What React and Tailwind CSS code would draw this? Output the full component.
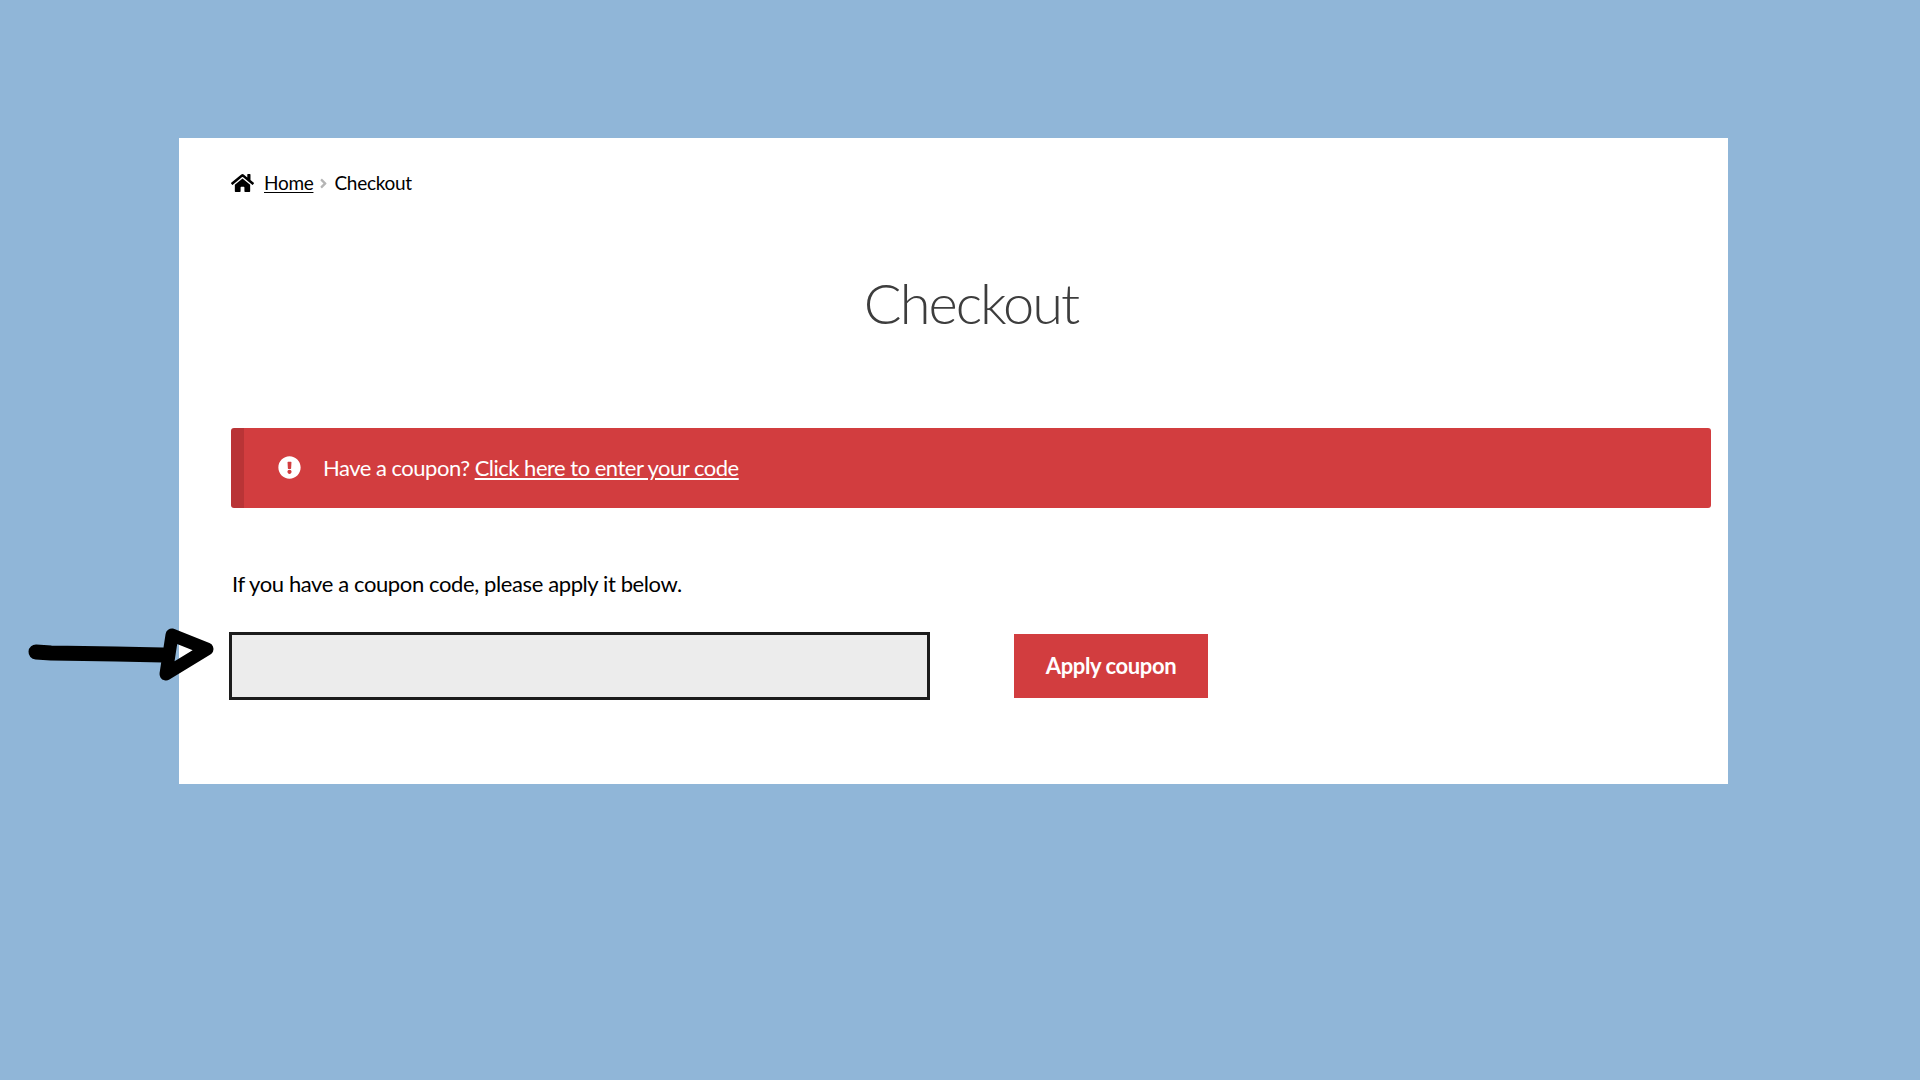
import React from "react";
import { FaHome, FaExclamationCircle, FaAngleRight } from "react-icons/fa";

const font = "font-['Lato','Noto_Sans',sans-serif]";

function Arrow() {
  return (
    <svg className="absolute left-[26px] top-[625px]" width="190" height="60" viewBox="0 0 190 60" fill="none" aria-hidden="true">
      <path d="M10 27 L25 28 L90 29 L137 30" stroke="#000" strokeWidth="15" strokeLinecap="round" strokeLinejoin="round" />
      <path d="M146 10 L181 24 L140 49 Z" stroke="#000" strokeWidth="13" strokeLinecap="round" strokeLinejoin="round" fill="none" />
    </svg>
  );
}

export default function App() {
  return (
    <div className={`relative min-h-[1080px] bg-[#90b6d8] pt-[138px] pl-[179px] ${font}`}>
      <Arrow />
      <main className="w-[1549px] h-[646px] bg-white pl-[52px] pr-[17px] flex flex-col">
        <nav className="flex items-center h-[24px] mt-[33px] text-[19px] tracking-[-0.3px] text-black">
          <FaHome className="text-[22px] w-[23px] mr-[10px]" />
          <a className="underline underline-offset-2">Home</a>
          <FaAngleRight className="text-[15px] mx-[3px] text-[#b5b5b5]" />
          <span>Checkout</span>
        </nav>
        <h1 className="mt-[73px] text-center text-[56px] leading-[70px] tracking-[-2px] font-light text-[#3d3d3d]">Checkout</h1>
        <div className="mt-[90px] h-[80px] rounded-[3px] bg-[#d23d3f] border-l-[13px] border-[#b93436] flex items-center pl-[34px] pb-[1px] text-white text-[22px] tracking-[-0.5px]">
          <FaExclamationCircle className="text-[23px] w-[23px] mr-[22px]" />
          <span>Have a coupon? <a className="underline underline-offset-2">Click here to enter your code</a></span>
        </div>
        <p className="mt-[61px] h-[30px] leading-[30px] pl-[1px] text-[22px] tracking-[-0.39px] text-black">If you have a coupon code, please apply it below.</p>
        <div className="mt-[33px] flex items-center -ml-[2px]">
          <input className="w-[701px] h-[68px] bg-[#ececec] border-[3px] border-[#1c1c1c]" />
          <button className="ml-[84px] w-[194px] h-[64px] pb-[1px] bg-[#d23d3f] text-white font-bold text-[22px] tracking-[-0.4px]">Apply coupon</button>
        </div>
      </main>
    </div>
  );
}
